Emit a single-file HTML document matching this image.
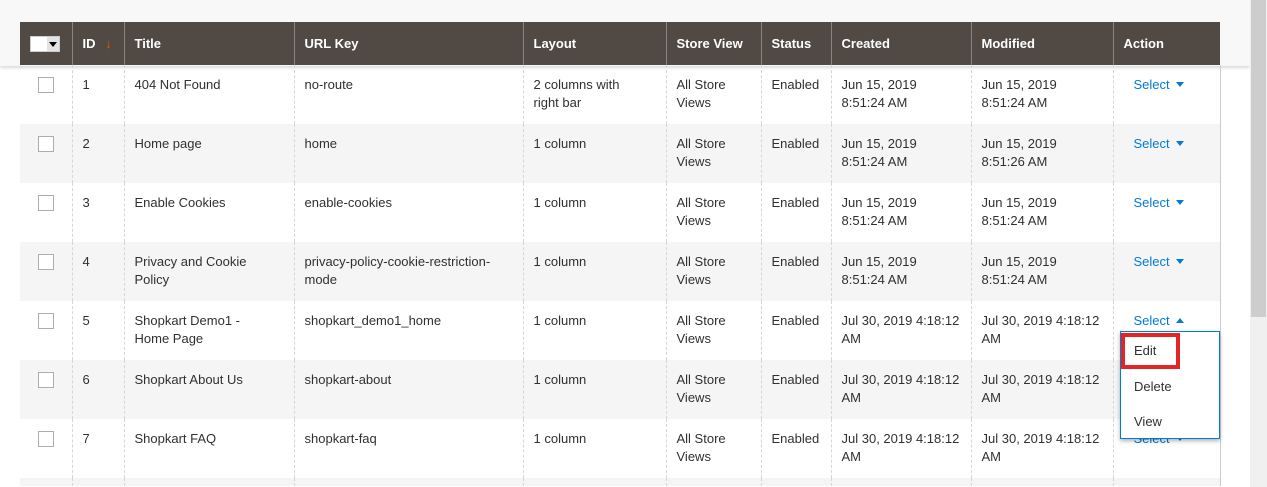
<!DOCTYPE html>
<html><head><style>
body{margin:0;width:1267px;height:487px;overflow:hidden;background:#fff;font-family:"Liberation Sans",sans-serif;font-size:13px;color:#303030;position:relative}
.top{position:absolute;left:0;top:0;width:1250px;height:66px;background:#f8f8f8;box-shadow:0 2px 3px rgba(0,0,0,.15)}
.sb{position:absolute;left:1250px;top:0;width:17px;height:487px;background:#f0f0f0;z-index:5}
.thumb{position:absolute;left:1251px;top:0;width:15px;height:317px;background:#cdcdcd;z-index:6}
table{position:absolute;left:20px;top:22px;border-collapse:collapse;table-layout:fixed;width:1200px}
th{background:#514943;color:#fff;font-weight:bold;text-align:left;height:43px;padding:0 10px;border-left:1px solid #8a837f;font-size:13px}
th:first-child{border-left:none}
td{vertical-align:top;padding:11px 10px 0;height:48px;line-height:18px;border-left:1px dashed #d6d6d6}
td:first-child{border-left:none;text-align:center}
td:last-child{border-right:1px solid #ccc}
tr:nth-child(odd) td{background:#f5f5f5}
tr.f td{height:8px;padding:0}
.cb{display:inline-block;width:14px;height:14px;border:1px solid #adadad;background:#fff;margin-top:1px}
.sel{color:#007bdb;margin-left:10px}
.sel:after{content:"";display:inline-block;margin-left:6px;border:4px solid transparent;border-top:5px solid #007bdb;border-bottom:0;vertical-align:2px}
.up:after{border-top:0;border-bottom:5px solid #007bdb}
.hc{display:inline-block;width:28px;height:14px;background:#fff;border:1px solid #ccc;position:relative;vertical-align:middle}
.hc b{position:absolute;right:0;top:0;width:12px;height:14px;background:#e3e3e3}
.hc b:after{content:"";position:absolute;left:2px;top:5px;border:4px solid transparent;border-top:5px solid #000;border-bottom:0}
.dd{position:absolute;left:1120px;top:331px;width:98px;height:106px;background:#fff;border:1px solid #007bdb;box-shadow:0 2px 4px rgba(0,0,0,.3)}
.dd div{position:absolute;left:13px}
.red{position:absolute;left:1121px;top:333px;width:51px;height:28px;border:4px solid #e22626}
</style></head><body>
<div class="top"></div>
<div class="sb"></div><div class="thumb"></div>
<table>
<colgroup><col style="width:52px"><col style="width:52px"><col style="width:170px"><col style="width:229px"><col style="width:143px"><col style="width:95px"><col style="width:70px"><col style="width:140px"><col style="width:142px"><col style="width:107px"></colgroup>
<tr><th style="padding:0 10px"><span class="hc"><b></b></span></th><th>ID <span style="color:#eb5202;font-weight:normal;margin-left:6px">↓</span></th><th>Title</th><th>URL Key</th><th>Layout</th><th>Store View</th><th>Status</th><th>Created</th><th>Modified</th><th>Action</th></tr>
<tr><td><span class="cb"></span></td><td>1</td><td>404 Not Found</td><td>no-route</td><td>2 columns with<br>right bar</td><td>All Store Views</td><td>Enabled</td><td>Jun 15, 2019 8:51:24 AM</td><td>Jun 15, 2019 8:51:24 AM</td><td><span class="sel">Select</span></td></tr>
<tr><td><span class="cb"></span></td><td>2</td><td>Home page</td><td>home</td><td>1 column</td><td>All Store Views</td><td>Enabled</td><td>Jun 15, 2019 8:51:24 AM</td><td>Jun 15, 2019 8:51:26 AM</td><td><span class="sel">Select</span></td></tr>
<tr><td><span class="cb"></span></td><td>3</td><td>Enable Cookies</td><td>enable-cookies</td><td>1 column</td><td>All Store Views</td><td>Enabled</td><td>Jun 15, 2019 8:51:24 AM</td><td>Jun 15, 2019 8:51:24 AM</td><td><span class="sel">Select</span></td></tr>
<tr><td><span class="cb"></span></td><td>4</td><td>Privacy and Cookie Policy</td><td>privacy-policy-cookie-restriction-mode</td><td>1 column</td><td>All Store Views</td><td>Enabled</td><td>Jun 15, 2019 8:51:24 AM</td><td>Jun 15, 2019 8:51:24 AM</td><td><span class="sel">Select</span></td></tr>
<tr><td><span class="cb"></span></td><td>5</td><td>Shopkart Demo1 -<br>Home Page</td><td>shopkart_demo1_home</td><td>1 column</td><td>All Store Views</td><td>Enabled</td><td>Jul 30, 2019 4:18:12 AM</td><td>Jul 30, 2019 4:18:12 AM</td><td><span class="sel up">Select</span></td></tr>
<tr><td><span class="cb"></span></td><td>6</td><td>Shopkart About Us</td><td>shopkart-about</td><td>1 column</td><td>All Store Views</td><td>Enabled</td><td>Jul 30, 2019 4:18:12 AM</td><td>Jul 30, 2019 4:18:12 AM</td><td></td></tr>
<tr><td><span class="cb"></span></td><td>7</td><td>Shopkart FAQ</td><td>shopkart-faq</td><td>1 column</td><td>All Store Views</td><td>Enabled</td><td>Jul 30, 2019 4:18:12 AM</td><td>Jul 30, 2019 4:18:12 AM</td><td><span class="sel">Select</span></td></tr>
<tr class="f"><td></td><td></td><td></td><td></td><td></td><td></td><td></td><td></td><td></td><td></td></tr>
</table>
<div class="dd"><div style="top:11px">Edit</div><div style="top:47px">Delete</div><div style="top:82px">View</div></div>
<div class="red"></div>
</body></html>
